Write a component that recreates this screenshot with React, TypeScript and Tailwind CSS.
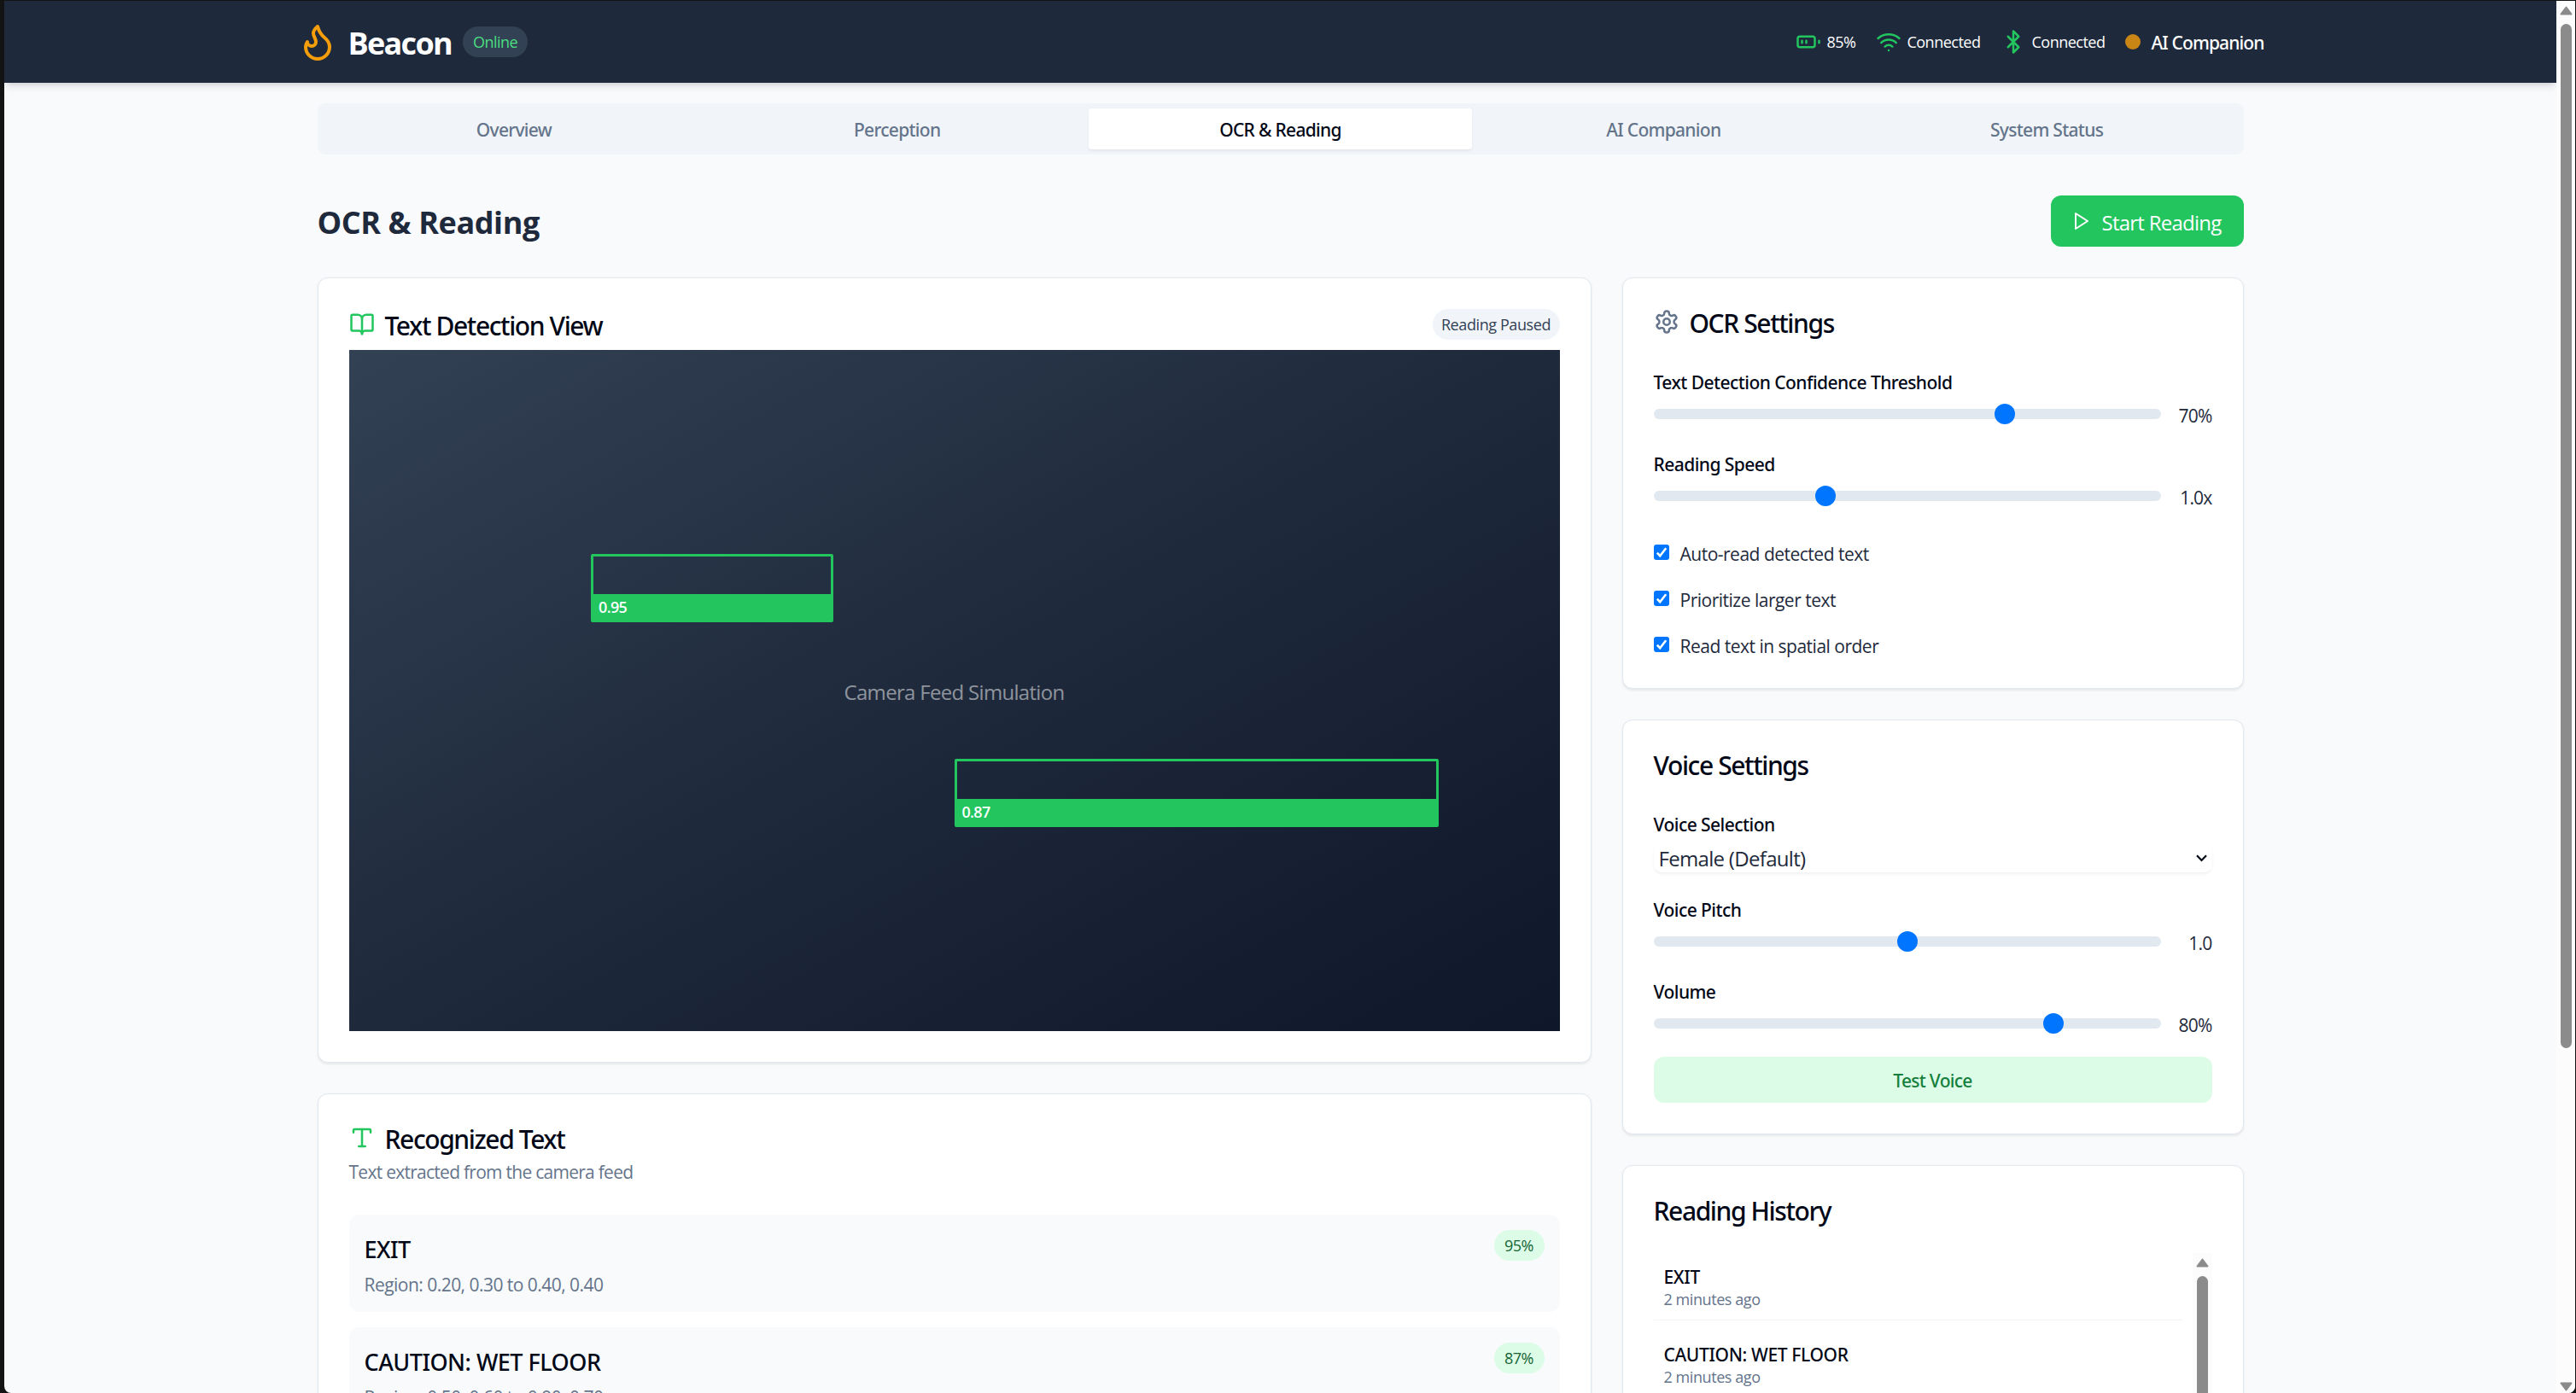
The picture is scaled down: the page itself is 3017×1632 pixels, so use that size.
import type { ReactNode } from "react";
import { Bluetooth, BookOpen, Flame, Type, Wifi } from "lucide-react";
import clsx from "clsx";

const tabs = ["Overview", "Perception", "OCR & Reading", "AI Companion", "System Status"];

const detections = [
  {
    text: "EXIT",
    confidence: 0.95,
    region: "0.20, 0.30 to 0.40, 0.40",
    box: "top-[30%] left-[20%] w-[20%] h-[10%]",
  },
  {
    text: "CAUTION: WET FLOOR",
    confidence: 0.87,
    region: "0.50, 0.60 to 0.90, 0.70",
    box: "top-[60%] left-[50%] w-[40%] h-[10%]",
  },
];

const options = ["Auto-read detected text", "Prioritize larger text", "Read text in spatial order"];

const Card = ({ className, children }: { className?: string; children: ReactNode }) => (
  <div
    className={clsx(
      "rounded-xl border border-[#e2e8f0] bg-white p-9 shadow-[0_1.5px_3px_rgba(0,0,0,0.08)]",
      className,
    )}
  >
    {children}
  </div>
);

const CardTitle = ({ icon, children }: { icon?: ReactNode; children: ReactNode }) => (
  <h3 className="flex h-[30px] items-center gap-3 font-['Noto_Sans',sans-serif] text-[30px] leading-none font-medium tracking-[-1.4px] text-[#020817]">
    {icon}
    <span className="pt-[3px]">{children}</span>
  </h3>
);

const FieldLabel = ({ children }: { children: ReactNode }) => (
  <div className="h-9 pt-[5px] font-['Noto_Sans',sans-serif] text-[21px] leading-[31px] font-medium tracking-[-0.54px] text-[#020817]">
    {children}
  </div>
);

const SliderField = ({ label, percent, value }: { label: string; percent: number; value: string }) => (
  <div>
    <FieldLabel>{label}</FieldLabel>
    <div className="mt-1.5 flex h-7.5 items-center">
      <div className="h-3 flex-1 rounded-md bg-[#e2e8f0] px-3">
        <div className="relative">
          <span
            className="absolute -top-1.5 size-6 -translate-x-1/2 rounded-full bg-[#0075ff]"
            style={{ left: `${percent}%` }}
          />
        </div>
      </div>
      <span className="w-[60px] pt-[3px] text-right text-[21px] leading-[30px] tracking-[-0.8px] text-[#1e293b]">
        {value}
      </span>
    </div>
  </div>
);

const BatteryIcon = () => (
  <svg
    className="size-[30px] text-[#22c55e]"
    viewBox="0 0 24 24"
    fill="none"
    stroke="currentColor"
    strokeWidth={2}
    strokeLinecap="round"
    strokeLinejoin="round"
  >
    <rect x="2" y="7" width="16" height="10" rx="2" />
    <path d="M22 11v2M6 11v2M10 11v2" />
  </svg>
);

const GearIcon = () => (
  <svg
    className="size-[30px] text-[#64748b]"
    viewBox="0 0 24 24"
    fill="none"
    stroke="currentColor"
    strokeWidth={2}
    strokeLinecap="round"
    strokeLinejoin="round"
  >
    <path d="M12.22 2h-.44a2 2 0 0 0-2 2v.18a2 2 0 0 1-1 1.73l-.43.25a2 2 0 0 1-2 0l-.15-.08a2 2 0 0 0-2.73.73l-.22.38a2 2 0 0 0 .73 2.73l.15.1a2 2 0 0 1 1 1.72v.51a2 2 0 0 1-1 1.74l-.15.09a2 2 0 0 0-.73 2.73l.22.38a2 2 0 0 0 2.73.73l.15-.08a2 2 0 0 1 2 0l.43.25a2 2 0 0 1 1 1.73V20a2 2 0 0 0 2 2h.44a2 2 0 0 0 2-2v-.18a2 2 0 0 1 1-1.73l.43-.25a2 2 0 0 1 2 0l.15.08a2 2 0 0 0 2.73-.73l.22-.39a2 2 0 0 0-.73-2.73l-.15-.08a2 2 0 0 1-1-1.74v-.5a2 2 0 0 1 1-1.74l.15-.09a2 2 0 0 0 .73-2.73l-.22-.38a2 2 0 0 0-2.73-.73l-.15.08a2 2 0 0 1-2 0l-.43-.25a2 2 0 0 1-1-1.73V4a2 2 0 0 0-2-2z" />
    <circle cx="12" cy="12" r="3" />
  </svg>
);

const ScrollArrow = ({ className }: { className?: string }) => (
  <svg className={className} viewBox="0 0 15 11" fill="#8b8b8b" stroke="#8b8b8b" strokeLinejoin="round">
    <path d="M7.5 1.5 13.5 9.5h-12z" strokeWidth={2} />
  </svg>
);

const Header = () => (
  <header className="relative h-24 shrink-0 bg-[#1e293b] text-white shadow-[0_6px_9px_-1.5px_rgba(0,0,0,0.1),0_3px_6px_-3px_rgba(0,0,0,0.12)]">
    <div className="mx-auto flex h-full w-[2304px] items-center justify-between">
      <div className="flex items-center">
        <Flame className="size-12 text-[#f59e0b]" />
        <h1 className="ml-3 pt-[3px] text-[36px] leading-[48px] font-bold tracking-[-1.7px]">Beacon</h1>
        <span className="ml-[13px] flex h-9 w-[76px] items-center justify-center rounded-full bg-[#334155] text-[18px] tracking-[-0.55px] text-[#4ade80]">
          Online
        </span>
      </div>
      <div className="flex items-center gap-6 text-[18px] tracking-[-0.5px]">
        <div className="flex items-center gap-1.5">
          <BatteryIcon />
          <span className="pt-px">85%</span>
        </div>
        <div className="flex items-center gap-1.5">
          <Wifi className="size-[30px] text-[#22c55e]" />
          <span className="pt-px">Connected</span>
        </div>
        <div className="flex items-center gap-1.5">
          <Bluetooth className="size-[30px] text-[#22c55e]" />
          <span className="pt-px">Connected</span>
        </div>
        <div className="flex items-center gap-3">
          <span className="size-[18px] rounded-full bg-[#c98615]" />
          <span className="pt-[3px] font-['Noto_Sans',sans-serif] text-[21px] font-medium tracking-[-0.88px]">
            AI Companion
          </span>
        </div>
      </div>
    </div>
  </header>
);

const DetectionView = () => (
  <Card>
    <div className="mb-3 flex h-9 items-center justify-between">
      <CardTitle icon={<BookOpen className="size-[30px] text-[#22c55e]" />}>Text Detection View</CardTitle>
      <span className="flex h-9 w-[149px] items-center justify-center rounded-full bg-[#f1f5f9] pt-px text-[18px] tracking-[-0.4px] text-[#334155]">
        Reading Paused
      </span>
    </div>
    <div className="relative flex h-[798px] items-center justify-center bg-linear-to-br from-[#334155] via-[#1e293b] to-[#0f172a]">
      <span className="pt-[3px] text-[24px] tracking-[-0.69px] text-white/50">Camera Feed Simulation</span>
      {detections.map((item) => (
        <div
          key={item.text}
          className={clsx(
            "absolute flex flex-col justify-end rounded-[2px] border-3 border-[#22c55e]",
            item.box,
          )}
        >
          <div className="h-[30px] bg-[#22c55e] px-1.5 text-[18px] leading-[30px] font-semibold tracking-[-0.7px] text-white">
            {item.confidence}
          </div>
        </div>
      ))}
    </div>
  </Card>
);

const RecognizedText = () => (
  <Card>
    <CardTitle icon={<Type className="size-[30px] text-[#22c55e]" />}>Recognized Text</CardTitle>
    <p className="mt-[9px] h-[30px] text-[21px] leading-[32px] tracking-[-0.73px] text-[#64748b]">
      Text extracted from the camera feed
    </p>
    <div className="mt-9 flex flex-col gap-4.5">
      {detections.map((item) => (
        <div key={item.text} className="flex items-start justify-between rounded-xl bg-[#f8fafc] p-4.5">
          <div>
            <p className="h-[42px] font-['Noto_Sans',sans-serif] text-[27px] leading-[45px] font-medium tracking-[-0.51px] text-[#020817]">
              {item.text}
            </p>
            <p className="mt-1.5 h-[30px] text-[21px] leading-[32px] tracking-[-0.53px] text-[#64748b]">
              Region: {item.region}
            </p>
          </div>
          <span className="flex h-9 w-[59px] items-center justify-center rounded-full bg-[#dcfce7] text-[18px] tracking-[-0.5px] text-[#166534]">
            {Math.round(item.confidence * 100)}%
          </span>
        </div>
      ))}
    </div>
  </Card>
);

const OcrSettings = () => (
  <Card>
    <CardTitle icon={<GearIcon />}>OCR Settings</CardTitle>
    <div className="mt-9 flex flex-col gap-6">
      <SliderField label="Text Detection Confidence Threshold" percent={70} value="70%" />
      <SliderField label="Reading Speed" percent={33.3} value="1.0x" />
      <div className="mt-3 flex flex-col gap-6">
        {options.map((option) => (
          <div key={option} className="flex h-[30px] items-center gap-[13px]">
            <svg className="size-[18px] rounded-[3px] bg-[#0075ff]" viewBox="0 0 18 18" fill="none">
              <path d="m3.8 9.6 3.4 3.6 7-9" stroke="white" strokeWidth={2.6} />
            </svg>
            <span className="pt-[3px] text-[21px] leading-[30px] tracking-[-0.5px] text-[#1e293b]">{option}</span>
          </div>
        ))}
      </div>
    </div>
  </Card>
);

const VoiceSettings = () => (
  <Card>
    <CardTitle>Voice Settings</CardTitle>
    <div className="mt-9 flex flex-col gap-6">
      <div>
        <FieldLabel>Voice Selection</FieldLabel>
        <div className="mt-1.5 flex h-[34px] items-center justify-between rounded-[9px] bg-white px-1.5 text-[24px] tracking-[-0.69px] text-[#1e293b] shadow-[0_1.5px_3px_rgba(0,0,0,0.06)]">
          <span className="pt-[2px]">Female (Default)</span>
          <svg className="h-[9px] w-[13px]" viewBox="0 0 13 9" fill="none">
            <path d="m1 1.3 5.5 5.7L12 1.3" stroke="#020817" strokeWidth={2.2} />
          </svg>
        </div>
      </div>
      <SliderField label="Voice Pitch" percent={50} value="1.0" />
      <SliderField label="Volume" percent={80} value="80%" />
      <button className="h-[54px] rounded-xl bg-[#dcfce7] pt-[3px] font-['Noto_Sans',sans-serif] text-[21px] font-medium tracking-[-0.7px] text-[#15803d]">
        Test Voice
      </button>
    </div>
  </Card>
);

const ReadingHistory = () => (
  <Card>
    <CardTitle>Reading History</CardTitle>
    <div className="mt-9 flex h-[288px]">
      <div className="mr-3 flex flex-1 flex-col gap-3">
        {detections.map((item) => (
          <div key={item.text} className="border-b border-[#f1f5f9] p-3">
            <p className="h-[30px] font-['Noto_Sans',sans-serif] text-[21px] leading-[32px] font-medium tracking-[-0.36px] text-[#020817]">
              {item.text}
            </p>
            <p className="text-[18px] leading-6 tracking-[-0.43px] text-[#64748b]">2 minutes ago</p>
          </div>
        ))}
      </div>
      <div className="flex w-[23px] flex-col items-center bg-[#fcfcfc] pt-1.5">
        <ScrollArrow className="h-[11px] w-[15px]" />
        <div className="mt-[10px] w-[13px] flex-1 rounded-full bg-[#8b8b8b]" />
      </div>
    </div>
  </Card>
);

const App = () => {
  return (
    <div className="h-screen w-full overflow-hidden bg-[#131313] pt-px pr-px pl-[5px] font-['Open_Sans','Noto_Sans',sans-serif]">
      <div className="flex h-full overflow-hidden rounded-b-[8px] bg-[#f8fafc]">
        <div className="flex flex-1 flex-col overflow-hidden">
          <Header />
          <main className="mx-auto w-[2304px] p-6">
            <nav className="grid h-[60px] grid-cols-5 rounded-[9px] bg-[#f1f5f9] p-1.5">
              {tabs.map((tab) => (
                <button
                  key={tab}
                  className={clsx(
                    "rounded-[4px] pt-[3px] font-['Noto_Sans',sans-serif] text-[21px] font-medium tracking-[-0.7px]",
                    tab === "OCR & Reading"
                      ? "bg-white text-[#020817] shadow-[0_1.5px_3px_rgba(0,0,0,0.06)]"
                      : "text-[#64748b]",
                  )}
                >
                  {tab}
                </button>
              ))}
            </nav>

            <div className="mt-12 flex items-center justify-between">
              <h2 className="pt-[3px] text-[36px] leading-[48px] font-bold tracking-[-0.4px] text-[#1e293b]">
                OCR & Reading
              </h2>
              <button className="flex h-[60px] w-[226px] items-center gap-3 rounded-xl bg-[#22c55e] px-6 text-[24px] tracking-[-0.75px] text-white">
                <svg
                  className="size-6"
                  viewBox="0 0 24 24"
                  fill="none"
                  stroke="currentColor"
                  strokeWidth={2}
                  strokeLinejoin="round"
                >
                  <path d="M5 3 19 12 5 21z" />
                </svg>
                <span className="pt-[3px] whitespace-nowrap">Start Reading</span>
              </button>
            </div>

            <div className="mt-9 grid grid-cols-3 gap-9">
              <div className="col-span-2 flex flex-col gap-9">
                <DetectionView />
                <RecognizedText />
              </div>
              <div className="flex flex-col gap-9">
                <OcrSettings />
                <VoiceSettings />
                <ReadingHistory />
              </div>
            </div>
          </main>
        </div>

        {/* page scrollbar */}
        <div className="flex w-[22px] flex-col items-center bg-[#fcfcfc] pt-1.5 pb-0.5">
          <ScrollArrow className="h-[11px] w-[15px]" />
          <div className="mt-[10px] h-[1200px] w-[13px] rounded-full bg-[#8b8b8b]" />
          <ScrollArrow className="mt-auto h-[11px] w-[15px] rotate-180" />
        </div>
      </div>
    </div>
  );
};

export default App;
